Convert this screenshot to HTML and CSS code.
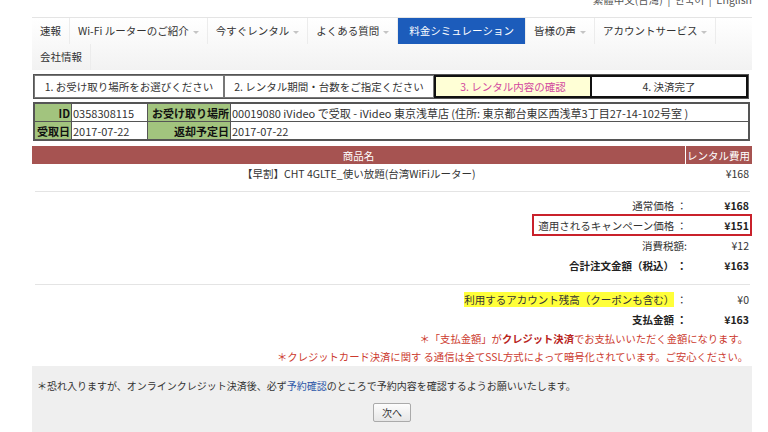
FILE: index.html
```html
<!DOCTYPE html>
<html lang="ja">
<head>
  <meta charset="UTF-8" />
  <title>料金シミュレーション</title>
  <link rel="stylesheet" href="styles.css">
</head>
<body>
<div class="wrap">

  <div class="lang">繁體中文(台灣) &nbsp;|&nbsp; 한국어 &nbsp;|&nbsp; English</div>

  <ul class="nav">
    <li>速報</li>
    <li>Wi-Fi ルーターのご紹介<span class="caret"></span></li>
    <li>今すぐレンタル<span class="caret"></span></li>
    <li>よくある質問<span class="caret"></span></li>
    <li class="active">料金シミュレーション</li>
    <li>皆様の声<span class="caret"></span></li>
    <li>アカウントサービス<span class="caret"></span></li>
    <li>会社情報</li>
  </ul>

  <div class="steps">
    <div class="step">1. お受け取り場所をお選びください</div>
    <div class="step">2. レンタル期間・台数をご指定ください</div>
    <div class="step now">3. レンタル内容の確認</div>
    <div class="step last">4. 決済完了</div>
  </div>

  <table class="info">
    <tr>
      <th class="c1">ID</th>
      <td class="c2">0358308115</td>
      <th class="c3">お受け取り場所</th>
      <td>00019080 iVideo で受取 - iVideo 東京浅草店 (住所: 東京都台東区西浅草3丁目27-14-102号室 )</td>
    </tr>
    <tr>
      <th>受取日</th>
      <td>2017-07-22</td>
      <th>返却予定日</th>
      <td>2017-07-22</td>
    </tr>
  </table>

  <table class="items">
    <tr>
      <th class="name">商品名</th>
      <th class="fee">レンタル費用</th>
    </tr>
    <tr>
      <td class="name">【早割】CHT 4GLTE_使い放題(台湾WiFiルーター)</td>
      <td class="fee">¥168</td>
    </tr>
  </table>

  <div class="summary">
    <div class="row"><span class="label">通常価格 ：</span><span class="val b">¥168</span></div>
    <div class="row campaign"><span class="label">適用されるキャンペーン価格 ：</span><span class="val b">¥151</span></div>
    <div class="row"><span class="label">消費税額:</span><span class="val">¥12</span></div>
    <div class="row"><span class="label b">合計注文金額（税込） ：</span><span class="val b">¥163</span></div>
    <div class="sep"></div>
    <div class="row"><span class="label"><mark>利用するアカウント残高（クーポンも含む）</mark> ：</span><span class="val">¥0</span></div>
    <div class="row"><span class="label b">支払金額 ：</span><span class="val b">¥163</span></div>
    <div class="notes">
      <p class="note">＊「支払金額」が<strong>クレジット決済</strong>でお支払いいただく金額になります。</p>
      <p class="note">＊クレジットカード決済に関す る通信は全てSSL方式によって暗号化されています。ご安心ください。</p>
    </div>
  </div>

  <div class="foot">
    <p>＊恐れ入りますが、オンラインクレジット決済後、必ず<a href="#">予約確認</a>のところで予約内容を確認するようお願いいたします。</p>
    <div class="btns"><button>次へ</button></div>
  </div>

</div>
</body>
</html>
```

FILE: styles.css
```css
body {
  margin: 0;
  font-family: "Noto Sans CJK JP", "Noto Sans", sans-serif;
  font-size: 10.5px;
  color: #333;
  background: #fff;
}
.wrap {
  width: 720px;
  margin-left: 32px;
}
.lang {
  margin-top: -6px;
  height: 12px;
  line-height: 12px;
  text-align: right;
  color: #555;
}
.nav {
  list-style: none;
  margin: 11px 0 0;
  padding: 0;
  display: flex;
  flex-wrap: wrap;
  border-top: 1px solid #e4e4e4;
  background: linear-gradient(#fff, #f2f2f2);
}
.nav li {
  height: 26px;
  line-height: 26px;
  padding: 0 8px;
  border-right: 1px solid #ececec;
  white-space: nowrap;
}
.nav li.active {
  background: #1c5cbb;
  color: #fff;
  padding: 0 11px;
}
.caret {
  display: inline-block;
  margin-left: 4px;
  vertical-align: middle;
  border-left: 3px solid transparent;
  border-right: 3px solid transparent;
  border-top: 3px solid #c4c4c4;
}
.steps {
  display: grid;
  grid-template-columns: 190px 210px 158px 1fr;
  margin: 4px 3px 0 1px;
  height: 25px;
  border: 1px solid #555;
  box-sizing: border-box;
}
.step {
  border: 1px solid #777;
  text-align: center;
  line-height: 21px;
  background: #fff;
}
.step.now {
  border: 2px solid #111;
  background: #ffffd6;
  color: #d2489e;
  line-height: 19px;
}
.step.last {
  border: 2px solid #111;
  border-left: 0;
  line-height: 19px;
}
.info {
  width: 717px;
  margin: 3px 3px 0 1px;
  border-collapse: collapse;
  border: 2px solid #555;
  font-size: 11px;
}
.info th, .info td {
  border: 1px solid #555;
  height: 17px;
  padding: 0 1px;
  white-space: nowrap;
}
.info th {
  background: #a2c47e;
  color: #111;
  text-align: right;
  font-weight: bold;
}
.info td {
  background: #fff;
  text-align: left;
}
.info .c1 { width: 34px; }
.info .c2 { width: 73px; }
.info .c3 { width: 80px; }
.items {
  width: 100%;
  margin-top: 5px;
  border-collapse: collapse;
}
.items th {
  background: #a65351;
  color: #fff;
  font-weight: normal;
  height: 18px;
  padding: 0;
}
.items th.fee {
  width: 64px;
  border-left: 1px solid #fff;
  text-align: right;
  padding-right: 2px;
}
.items td {
  height: 19px;
  padding: 0;
}
.items td.name {
  text-align: center;
}
.items td.fee {
  text-align: right;
  padding-right: 3px;
}
.summary {
  border-top: 1px solid #e4e4e4;
  margin: 8px 2px 0 3px;
  padding-top: 3px;
}
.row {
  display: flex;
  justify-content: flex-end;
  align-items: center;
  height: 20px;
  padding-right: 1px;
}
.row.campaign {
  width: 220px;
  margin: -1px -2px -1px auto;
  height: 22px;
  box-sizing: border-box;
  border: 2px solid #c9212b;
  padding-right: 1px;
}
.label {
  text-align: right;
  white-space: nowrap;
}
.val {
  width: 62px;
  text-align: right;
}
.b {
  font-weight: bold;
  color: #222;
}
.sep {
  border-top: 1px solid #e4e4e4;
  margin: 9px 0 4px;
}
mark {
  background: #ffff3a;
  color: #333;
}
.notes {
  margin-top: 1px;
}
.note {
  margin: 0;
  text-align: right;
  color: #cc3a2e;
  font-size: 10.3px;
  line-height: 18px;
  padding-right: 2px;
}
.note strong {
  color: #b8231c;
}
.foot {
  background: #efefef;
  padding: 11px 5px 12px;
  font-size: 10px;
}
.foot p {
  margin: 0;
  line-height: 18px;
}
.foot a {
  color: #2d57a8;
  text-decoration: none;
}
.btns {
  text-align: center;
  margin-top: 8px;
}
button {
  font-family: inherit;
  font-size: 10px;
  color: #333;
  height: 19px;
  padding: 0 8px;
  background: linear-gradient(#fdfdfd, #e6e6e6);
  border: 1px solid #aaa;
  border-radius: 2px;
}
```
